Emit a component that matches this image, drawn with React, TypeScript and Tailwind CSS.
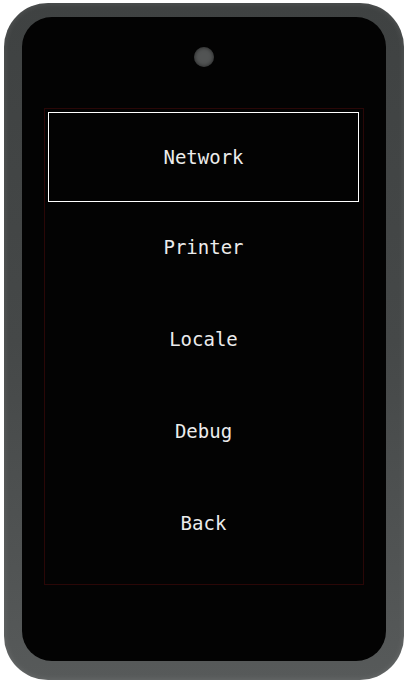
const items = ["Network", "Printer", "Locale", "Debug", "Back"];

export default function App() {
  return (
    <div className="h-[683px] w-[408px] bg-white pl-[4px] pt-[3px]">
      <div className="h-[677px] w-[400px] rounded-[44px] bg-gradient-to-b from-[#3f4242] via-[#454848] to-[#575a5a] px-[18px] pb-[19px] pt-[14px] shadow-[inset_0_0_6px_rgba(255,255,255,0.12)]">
        <div className="flex h-full w-full flex-col items-center rounded-[30px] bg-[#030303]">
          <div className="mt-[30px] h-[20px] w-[20px] rounded-full bg-[#525454] shadow-[inset_0_0_4px_rgba(0,0,0,0.6)]" />
          <div className="mt-[41px] flex h-[477px] w-[320px] flex-col border border-[#2a0707] pl-[3px] pr-[4px] pt-[3px]">
            {items.map((item, i) => (
              <div
                key={item}
                className={
                  "flex shrink-0 items-center justify-center text-[19px] leading-none text-[#ececec] [font-family:'DejaVu_Sans_Mono',monospace] " +
                  (i === 0 ? "-mb-[1px] h-[90px] border border-white" : "h-[92px]")
                }
              >
                {item}
              </div>
            ))}
          </div>
        </div>
      </div>
    </div>
  );
}
